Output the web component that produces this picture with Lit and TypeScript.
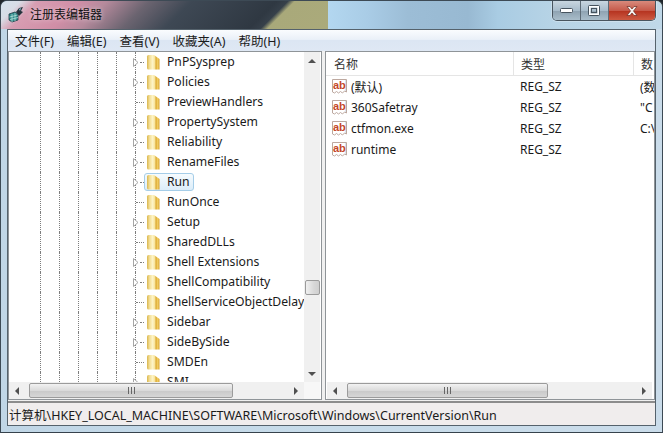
import { LitElement, html, css, svg } from "lit";
import { customElement } from "lit/decorators.js";

const keys: [string, boolean, boolean?][] = [
  ["PnPSysprep", true], ["Policies", true], ["PreviewHandlers", false], ["PropertySystem", true],
  ["Reliability", true], ["RenameFiles", true], ["Run", true, true], ["RunOnce", false],
  ["Setup", true], ["SharedDLLs", false], ["Shell Extensions", true], ["ShellCompatibility", true],
  ["ShellServiceObjectDelay", false], ["Sidebar", true], ["SideBySide", true], ["SMDEn", false], ["SMI", true],
];
const values: [string, string, string][] = [
  ["(默认)", "REG_SZ", "(数"], ["360Safetray", "REG_SZ", "\"C"], ["ctfmon.exe", "REG_SZ", "C:\\"], ["runtime", "REG_SZ", ""],
];

const folder = svg`<svg width="15" height="18" viewBox="0 0 15 18"><defs><linearGradient id="fg" x1="0" x2="1" y1="0" y2="0"><stop offset="0" stop-color="#d9b64e"/><stop offset=".2" stop-color="#f3dd93"/><stop offset=".45" stop-color="#fdf4c8"/><stop offset=".62" stop-color="#f8e49c"/><stop offset=".72" stop-color="#dba934"/><stop offset=".85" stop-color="#f2cd62"/><stop offset="1" stop-color="#d5a12e"/></linearGradient></defs><path d="M1 3.500Q1 2 2.500 2H8l5.500 4v10.500H2.500Q1 16.500 1 15z" fill="url(#fg)"/></svg>`;
const arrow = svg`<svg width="6" height="9" viewBox="0 0 6 9"><path d="M.5.500 5 4.500.5 8.500z" fill="#fff" stroke="#a6a6a6"/></svg>`;
const ab = svg`<svg width="17" height="17" viewBox="0 0 17 17"><path d="M1.500 1.500h14v12.500l-2-1-2 2-2-1.500-2 1.500-2-1.500-2 1.500-2-1z" fill="#fff" stroke="#bda89f"/><rect x="14" y="2" width="1" height="11" fill="#d9e4ee"/></svg>`;

@customElement("app-root")
export class AppRoot extends LitElement {
  static styles = css`
    :host { display: block; width: 663px; height: 433px; overflow: hidden; font-family: "Noto Sans", "Noto Sans CJK SC", sans-serif; font-size: 12px; color: #1a1a1a; background: #20262b; }
    .window { height: 433px; box-sizing: border-box; display: flex; flex-direction: column; border-radius: 7px 7px 0 0; border: 1px solid #3d4a55; border-bottom-color: #36424c; overflow: hidden;
      background: linear-gradient(90deg, #c0d6e6, #c8dcea 50%, #cadcea); }
    .title { height: 28px; flex: none; display: flex; align-items: center; position: relative; padding: 0 0 2px 7px; box-sizing: border-box;
      background:
        linear-gradient(90deg, #b3d7f0 0, #a9cce6 40px, #9cbdd6 80px, #98b9d2 140px, #a9cce3 170px, #b8d4e6 230px, #c0d8e8 335px) 327px 0 / 334px 28px no-repeat,
        linear-gradient(135deg, #d4e2ed 0, #d8dde6 14px, #d79db2 26px, #d08ea6 56px, #b58a9c 75px, #6b6470 105px, #3e4854 135px, #2f3842 195px, #36404a 203px, #a9a97a 208px, #b0ae7e 400px); }
    .title .text { font-size: 12px; color: #111; margin-left: 5px; text-shadow: 0 0 5px #ffffffa0; }
    .btns { position: absolute; top: 0; right: 6px; height: 19px; display: flex; border: 1px solid #49555f; border-top: none; border-radius: 0 0 5px 5px; overflow: hidden; box-shadow: 0 0 0 1px #ffffff40; }
    .btn { width: 27px; display: flex; align-items: center; justify-content: center; background: linear-gradient(#c8d6e0, #a8bccb 50%, #8ea2b1 52%, #a9bdca); border-right: 1px solid #5d6b76; }
    .btn.close { width: 46px; border: none; background: linear-gradient(#d88a7c, #c65a4a 50%, #b5321f 52%, #cc5a42); }
    .body { flex: 1; min-height: 0; display: flex; flex-direction: column; margin: 0 6px 6px; border: 1px solid #55626c; background: #f0f0f0; }
    .menu { height: 21px; flex: none; display: flex; align-items: center; padding-left: .5px; background: linear-gradient(#fafcfe, #eaf0f8 45%, #dce6f3 50%, #dfe8f4); }
    .menu span { padding: 0 6.500px; font-size: 12.500px; color: #1c1c1c; }
    .panes { flex: 1; min-height: 0; display: flex; gap: 3px; background: #f0f0f0; }
    .pane { border: 1px solid #8f9498; background: #fff; overflow: hidden; min-width: 0; }
    .left { width: 314px; flex: none; box-sizing: border-box; display: grid; grid-template-columns: 1fr 16px 1px; grid-template-rows: 1fr 17px; }
    .right { flex: 1; display: flex; flex-direction: column; }
    .tree { grid-area: 1 / 1; overflow: hidden; min-height: 0; min-width: 0; }
    .row { height: 20px; display: flex; align-items: center; position: relative; white-space: nowrap; }
    .guides { display: flex; flex: none; padding-left: 31px; align-self: stretch; }
    .guides i { width: 19px; border-left: 1px dotted #7d7d7d; box-sizing: border-box; }
    .conn { width: 9px; height: 100%; flex: none; display: flex; align-items: center; position: relative; border-left: 1px dotted #7d7d7d; box-sizing: border-box; }
    .conn::after { content: ""; width: 8px; border-top: 1px dotted #7d7d7d; }
    .conn.exp::after { width: 4px; margin-left: 4px; }
    .exp-a { position: absolute; left: -3px; top: 6px; line-height: 0; }
    .node { display: flex; align-items: center; flex: none; height: 18px; box-sizing: border-box; border: 1px solid transparent; border-radius: 3px; padding: 0 3px 0 1px; }
    .node.sel { border-color: #a5cde8; background: linear-gradient(#f6fbfe, #dcedf9); }
    .fold { flex: none; line-height: 0; }
    .lbl { margin-left: 6px; font-size: 12.200px; line-height: 16px; }
    .vbar { grid-area: 1 / 2; background: #f0f0f0; display: flex; flex-direction: column; align-items: center; min-height: 0; }
    .vbar .sp { height: 211px; flex: none; }
    .vbar .thumb { width: 15px; height: 15px; flex: none; box-sizing: border-box; border: 1px solid #9b9b9b; border-radius: 2px; background: linear-gradient(90deg, #f0f0f0, #d8d8d8 60%, #cfcfcf); }
    .vbar .fill { flex: 1; }
    .cap { height: 17px; width: 16px; display: flex; align-items: center; justify-content: center; flex: none; }
    .hbar { height: 17px; display: flex; align-items: center; background: #f0f0f0; flex: none; }
    .left .hbar { grid-area: 2 / 1; }
    .right .hbar { margin: 0 2px 0 1px; }
    .hbar .gap { flex: none; width: 4px; }
    .hbar .fill { flex: 1; }
    .hthumb { height: 15px; width: 204px; flex: none; box-sizing: border-box; border: 1px solid #9b9b9b; border-radius: 2px; background: linear-gradient(#f2f2f2, #dadada 50%, #c9c9c9 52%, #d6d6d6); display: flex; align-items: center; justify-content: center; }
    .right .hthumb { width: 201px; }
    .corner { grid-area: 2 / 2; background: #f7f7f7; }
    .t { width: 0; height: 0; border-style: solid; border-color: transparent; }
    .t.u { border-width: 0 4px 4px; border-bottom-color: #505050; }
    .t.d { border-width: 4px 4px 0; border-top-color: #505050; }
    .t.l { border-width: 4px 4px 4px 0; border-right-color: #505050; }
    .t.r { border-width: 4px 0 4px 4px; border-left-color: #505050; }
    .grips { width: 7px; height: 7px; background: repeating-linear-gradient(90deg, #666 0 1px, transparent 1px 3px); }
    .head { height: 24px; flex: none; display: flex; border-bottom: 1px solid #e5e5e5; background: #fff; box-sizing: border-box; }
    .head div { border-right: 1px solid #e5e5e5; display: flex; align-items: center; padding-left: 7px; box-sizing: border-box; font-size: 12px; color: #333; }
    .head .c1 { padding-left: 8px; }
    .c1 { width: 188px; flex: none; }
    .c2 { width: 120px; flex: none; }
    .c3 { flex: 1; min-width: 0; overflow: hidden; }
    .head .c3 { border-right: none; }
    .list { flex: 1; min-height: 0; }
    .item { height: 21px; display: flex; align-items: center; white-space: nowrap; font-size: 12px; }
    .item > div { box-sizing: border-box; padding-left: 6px; }
    .item > .c1 { display: flex; align-items: center; padding-left: 5px; }
    .ab { position: relative; width: 17px; height: 17px; flex: none; margin-right: 3px; }
    .ab svg { display: block; }
    .ab b { position: absolute; left: 2px; top: 0; font: bold 11px/14px "Liberation Sans", sans-serif; color: #c4472a; }
    .status { height: 22px; flex: none; display: flex; align-items: center; padding-left: 1px; margin-top: 1px; background: #f0eded; border-top: 2px solid #8c8c8c; font-size: 12.500px; white-space: nowrap; }
  `;

  render() {
    const hbar = html`
      <div class="hbar"><span class="cap"><span class="t l"></span></span><span class="gap"></span>
        <div class="hthumb"><span class="grips"></span></div>
        <span class="fill"></span><span class="cap"><span class="t r"></span></span></div>`;
    return html`
      <div class="window">
        <div class="title">
          <svg width="17" height="17" viewBox="0 0 17 17"><path d="M1 8l6-2 3 2v6l-6 2-3-2z" fill="#2f8a8a" stroke="#1f3f48" stroke-width=".8"/><path d="M1.500 11l8-2M2 13.500l8-2M4 8v8M7 7v8" stroke="#bfe6e0" stroke-width=".7"/><path d="M8 6l3-4 4-1-2 4 2 1-4 4z" fill="#26323c"/><path d="M11 3l2-1-1 3z" fill="#8fd0e0"/></svg>
          <span class="text">注册表编辑器</span>
          <div class="btns">
            <div class="btn"><svg width="14" height="7"><rect x=".5" y="1.500" width="12" height="4" rx="1" fill="#fff" stroke="#46535e"/></svg></div>
            <div class="btn"><svg width="13" height="11"><rect x="1.500" y="1.500" width="9" height="8" rx="1" fill="none" stroke="#fff" stroke-width="2"/><rect x=".5" y=".5" width="11" height="10" rx="1" fill="none" stroke="#46535e"/><rect x="3.500" y="3.500" width="5" height="4" fill="none" stroke="#46535e"/></svg></div>
            <div class="btn close"><svg width="16" height="12" viewBox="0 0 16 12"><path d="M3 1.500h3l2 2.500 2-2.500h3L9.500 6 13 10.500h-3L8 8l-2 2.500H3L6.500 6z" fill="#f4f0ee" stroke="#6d2a20" stroke-width=".7"/></svg></div>
          </div>
        </div>
        <div class="body">
          <div class="menu"><span>文件(F)</span><span>编辑(E)</span><span>查看(V)</span><span>收藏夹(A)</span><span>帮助(H)</span></div>
          <div class="panes">
            <div class="pane left">
              <div class="tree">
                ${keys.map(([n, e, s]) => html`<div class="row">
                  <div class="guides"><i></i><i></i><i></i><i></i><i></i></div>
                  <div class="conn ${e ? "exp" : ""}">${e ? html`<span class="exp-a">${arrow}</span>` : ""}</div>
                  <div class="node ${s ? "sel" : ""}"><span class="fold">${folder}</span><span class="lbl">${n}</span></div>
                </div>`)}
              </div>
              <div class="vbar"><span class="cap"><span class="t u"></span></span><span class="sp"></span><span class="thumb"></span><span class="fill"></span><span class="cap"><span class="t d"></span></span></div>
              ${hbar}
              <div class="corner"></div>
            </div>
            <div class="pane right">
              <div class="head"><div class="c1">名称</div><div class="c2">类型</div><div class="c3">数</div></div>
              <div class="list">
                ${values.map(([a, b, c]) => html`<div class="item"><div class="c1"><span class="ab">${ab}<b>ab</b></span>${a}</div><div class="c2">${b}</div><div class="c3">${c}</div></div>`)}
              </div>
              ${hbar}
            </div>
          </div>
          <div class="status">计算机\\HKEY_LOCAL_MACHINE\\SOFTWARE\\Microsoft\\Windows\\CurrentVersion\\Run</div>
        </div>
      </div>`;
  }
}
